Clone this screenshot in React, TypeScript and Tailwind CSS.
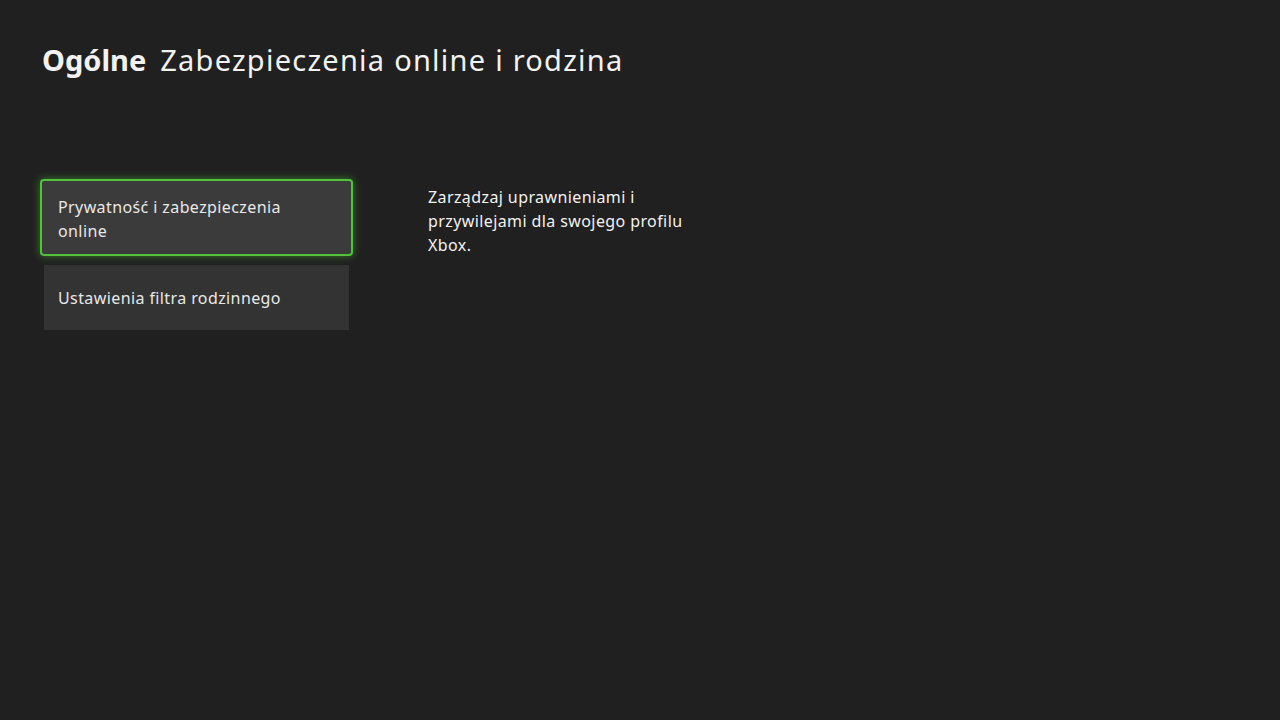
export default function App() {
  return (
    <div
      className="w-[1280px] h-[720px] bg-[#202020] text-[#f2f2f2] overflow-hidden"
      style={{ fontFamily: '"Noto Sans", "Open Sans", sans-serif' }}
    >
      <header className="pl-[42px] pt-[40px] flex items-baseline gap-[14px] text-[29px] leading-[40px]">
        <h1 className="font-bold">Ogólne</h1>
        <h2 className="font-normal tracking-[1.25px]">Zabezpieczenia online i rodzina</h2>
      </header>

      <div className="flex mt-[99px] pl-[40px] tracking-[0.4px]">
        <ul className="w-[313px] flex flex-col gap-[9px] text-[#e8e8e8]">
          {/* focused tile: green ring with a soft glow */}
          <li className="h-[77px] bg-[#3b3b3b] border-2 border-[#52c23c] rounded-[4px] shadow-[0_0_8px_rgba(82,194,60,0.55)] pl-[16px] pr-[12px] pt-[14px] text-[16px] leading-[24px]">
            Prywatność i zabezpieczenia
            <br />
            online
          </li>
          <li className="mx-[4px] h-[65px] bg-[#333333] pl-[14px] flex items-center text-[16px] leading-[24px]">
            Ustawienia filtra rodzinnego
          </li>
        </ul>

        <p className="ml-[75px] mt-[6px] w-[285px] text-[16px] leading-[24px]">
          Zarządzaj uprawnieniami i
          <br />
          przywilejami dla swojego profilu Xbox.
        </p>
      </div>
    </div>
  );
}
